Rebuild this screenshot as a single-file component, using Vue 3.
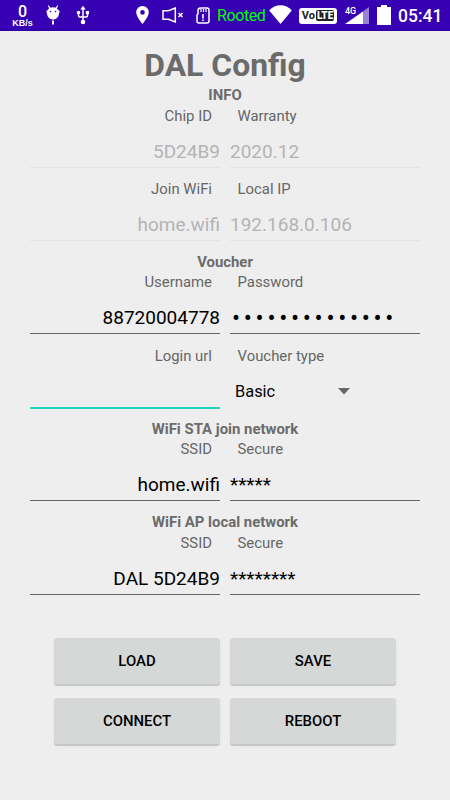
<script setup>
import { ref } from 'vue'

const sections = ref([
  {
    title: 'INFO',
    rows: [
      [
        { label: 'Chip ID', value: '5D24B9', disabled: true },
        { label: 'Warranty', value: '2020.12', disabled: true }
      ],
      [
        { label: 'Join WiFi', value: 'home.wifi', disabled: true },
        { label: 'Local IP', value: '192.168.0.106', disabled: true }
      ]
    ]
  },
  {
    title: 'Voucher',
    rows: [
      [
        { label: 'Username', value: '88720004778' },
        { label: 'Password', value: '••••••••••••••', secret: true }
      ],
      [
        { label: 'Login url', value: '', active: true },
        { label: 'Voucher type', value: 'Basic', select: true }
      ]
    ]
  },
  {
    title: 'WiFi STA join network',
    rows: [
      [
        { label: 'SSID', value: 'home.wifi' },
        { label: 'Secure', value: '*****' }
      ]
    ]
  },
  {
    title: 'WiFi AP local network',
    rows: [
      [
        { label: 'SSID', value: 'DAL 5D24B9' },
        { label: 'Secure', value: '********' }
      ]
    ]
  }
])

const actions = ['LOAD', 'SAVE', 'CONNECT', 'REBOOT']
</script>

<template>
  <div class="screen">
    <header class="status-bar">
      <div class="speed">
        <span class="speed-num">0</span>
        <span class="speed-unit">KB/s</span>
      </div>
      <svg class="droid" width="14" height="20" viewBox="0 0 14 20" fill="#fff">
        <path d="M2.2 .6l2 3M11.8 .6l-2 3" stroke="#fff" stroke-width="1.1" />
        <path d="M1.6 5C3 2.800 4.800 2.200 7 2.200S11 2.800 12.400 5L13.700 6.200 13 8.500C12.600 12 10.500 14.500 7 14.500S1.400 12 1 8.500L.3 6.200z" />
        <path d="M6 15.500h2V19.500H6z" />
        <circle cx="4.500" cy="6.500" r=".8" fill="#3700b3" />
        <circle cx="9.500" cy="6.500" r=".8" fill="#3700b3" />
      </svg>
      <svg class="usb" width="14" height="20" viewBox="0 0 14 20" fill="none" stroke="#fff" stroke-width="1.5">
        <path d="M7 3v13M2.500 8v2.500q0 1.500 1.500 1.500h6q1.500 0 1.500-1.500V8" />
        <path d="M7 .7L9.700 4.500H4.300z" fill="#fff" stroke="none" />
        <circle cx="7" cy="17" r="2.300" fill="#fff" stroke="none" />
        <circle cx="2.500" cy="7.500" r="1.700" fill="#fff" stroke="none" />
        <path d="M9.800 6H13v3.200H9.800z" fill="#fff" stroke="none" />
      </svg>
      <svg class="pin" width="13" height="18" viewBox="0 0 13 18">
        <path fill="#fff" fill-rule="evenodd" d="M6.500 0A6.300 6.300 0 0 0 .2 6.300C.2 11 6.500 18 6.500 18s6.300-7 6.300-11.700A6.300 6.300 0 0 0 6.500 0zm0 4.100a2.300 2.300 0 1 1 0 4.600 2.300 2.300 0 0 1 0-4.600z" />
      </svg>
      <svg class="mute" width="22" height="16" viewBox="0 0 22 16" fill="none" stroke="#fff" stroke-width="1.500">
        <path d="M1 3.800h5.500L13.300 1v14l-6.800-2.800H1z" />
        <path d="M16.500 6l4 4M20.500 6l-4 4" />
      </svg>
      <svg class="sd" width="14" height="17" viewBox="0 0 14 17" fill="none" stroke="#fff" stroke-width="1.500">
        <path d="M4.500 1H11q2 0 2 2v11q0 2-2 2H3q-2 0-2-2V8l1-1V3.500Q2 1 4.500 1z" />
        <path d="M5 2v3M7.500 2v3M10 2v3" stroke-width="1.200" />
        <path d="M7 7v4.500M7 12.500v1.500" stroke-width="1.600" />
      </svg>
      <span class="rooted">Rooted</span>
      <svg class="wifi" width="23" height="19" viewBox="0 0 23 19">
        <path fill="#fff" d="M.2 5.500C6-1.500 17-1.500 22.800 5.500L11.500 19z" />
      </svg>
      <div class="volte">Vo<b>LTE</b></div>
      <div class="signal">
        <svg width="24" height="17" viewBox="0 0 24 17">
          <path fill="#9b80d9" d="M18 4.500L24 0v17h-6z" />
          <path fill="#fff" d="M0 17L18 4.500V17z" />
        </svg>
        <span class="net">4G</span>
      </div>
      <svg class="battery" width="14" height="20" viewBox="0 0 14 20">
        <path fill="#fff" d="M4 0h6v2h4v18H0V2h4z" />
      </svg>
      <span class="clock">05:41</span>
    </header>

    <main class="content">
      <h1>DAL Config</h1>
      <section v-for="s in sections" :key="s.title">
        <h2>{{ s.title }}</h2>
        <div v-for="(row, i) in s.rows" :key="i" class="row">
          <div v-for="f in row" :key="f.label" class="cell">
            <div class="label">{{ f.label }}</div>
            <div v-if="f.select" class="select">
              <span>{{ f.value }}</span>
              <svg width="12" height="7" viewBox="0 0 12 7"><path fill="#666" d="M0 0h12L6 6.500z" /></svg>
            </div>
            <div v-else class="field" :class="{ disabled: f.disabled, active: f.active, secret: f.secret }">
              <span>{{ f.value }}</span>
            </div>
          </div>
        </div>
      </section>

      <div class="actions">
        <button v-for="a in actions" :key="a">{{ a }}</button>
      </div>
    </main>
  </div>
</template>

<style>
body {
  margin: 0;
  background: #eee;
}
</style>

<style scoped>
.screen {
  width: 450px;
  height: 800px;
  overflow: hidden;
  background: #eee;
  font-family: Roboto, sans-serif;
}

.status-bar {
  display: flex;
  align-items: center;
  box-sizing: border-box;
  height: 31px;
  padding-left: 11px;
  background: #3700b3;
  border-bottom: 1px solid #2a00a0;
  color: #fff;
}

.status-bar > * {
  flex-shrink: 0;
}

.speed {
  display: flex;
  flex-direction: column;
  align-items: center;
  width: 23px;
  padding-top: 3px;
}

.speed-num {
  font-size: 16px;
  line-height: 14px;
  font-weight: 500;
}

.speed-unit {
  font-family: "Liberation Sans", sans-serif;
  font-size: 9px;
  line-height: 9px;
  font-weight: 700;
}

.droid {
  margin-left: 12px;
}

.usb {
  margin-left: 16px;
}

.pin {
  margin-left: 46px;
}

.mute {
  margin-left: 13px;
}

.sd {
  margin-left: 12px;
}

.rooted {
  width: 48px;
  margin-left: 7px;
  padding-top: 1px;
  font-size: 16px;
  letter-spacing: -0.4px;
  color: #0f0;
  white-space: nowrap;
}

.wifi {
  margin-left: 4px;
  margin-top: -1px;
}

.volte {
  display: flex;
  align-items: center;
  justify-content: center;
  box-sizing: border-box;
  width: 38px;
  height: 16px;
  margin-left: 7px;
  margin-top: 1px;
  border-radius: 3px;
  background: #fff;
  color: #222;
  font-size: 11px;
  font-weight: 700;
}

.volte b {
  margin-left: 1px;
  padding: 0 1px;
  border-radius: 2px;
  background: #222;
  color: #fff;
  line-height: 11px;
  font-size: 10px;
}

.signal {
  position: relative;
  height: 17px;
  margin-left: 8px;
  margin-top: 1px;
}

.signal svg {
  display: block;
}

.net {
  position: absolute;
  left: 0;
  top: 0;
  font-size: 9px;
  line-height: 9px;
  font-weight: 500;
}

.battery {
  margin-left: 8px;
}

.clock {
  margin-left: 7px;
  padding-top: 1px;
  font-size: 17.5px;
  font-weight: 500;
}

.content {
  padding: 14px 30px 0;
}

h1 {
  margin: 0;
  font-size: 31.9px;
  line-height: 40px;
  font-weight: 700;
  text-align: center;
  color: #6b6b6b;
}

h2 {
  margin: 0;
  font-size: 14.9px;
  line-height: 20.5px;
  font-weight: 700;
  text-align: center;
  color: #6b6b6b;
}

.row {
  display: grid;
  grid-template-columns: 1fr 1fr;
  column-gap: 10px;
}

.cell {
  height: 73.2px;
}

.label {
  padding: 0 8px 0 7.5px;
  font-size: 14.9px;
  line-height: 20px;
  color: #666;
}

.cell:first-child {
  text-align: right;
}

.field {
  box-sizing: border-box;
  height: 42px;
  padding-top: 13px;
  border-bottom: 1px solid #666;
  font-size: 19px;
  line-height: 26px;
  color: #000;
}

.field.disabled {
  color: #b4b4b4;
  border-bottom-color: #e4e4e4;
}

.field.active {
  height: 43px;
  border-bottom: 2px solid #1fd5bf;
}

.field.secret {
  padding-left: 2px;
  font-size: 24px;
  line-height: 26px;
  letter-spacing: 3.7px;
}

.select {
  display: flex;
  align-items: center;
  justify-content: space-between;
  width: 115px;
  padding: 15px 0 0 5px;
  font-size: 16.4px;
  line-height: 22px;
}

.select svg {
  margin-bottom: 1px;
}

.actions {
  display: grid;
  grid-template-columns: 166px 166px;
  justify-content: center;
  gap: 14px 10px;
  margin-top: 31.4px;
}

button {
  height: 46px;
  padding: 0;
  border: none;
  border-radius: 3px;
  background: #d6d8d7;
  box-shadow: 0 2px 1px #c4c5c5;
  color: #000;
  font-family: inherit;
  font-size: 14.9px;
  font-weight: 500;
}
</style>
